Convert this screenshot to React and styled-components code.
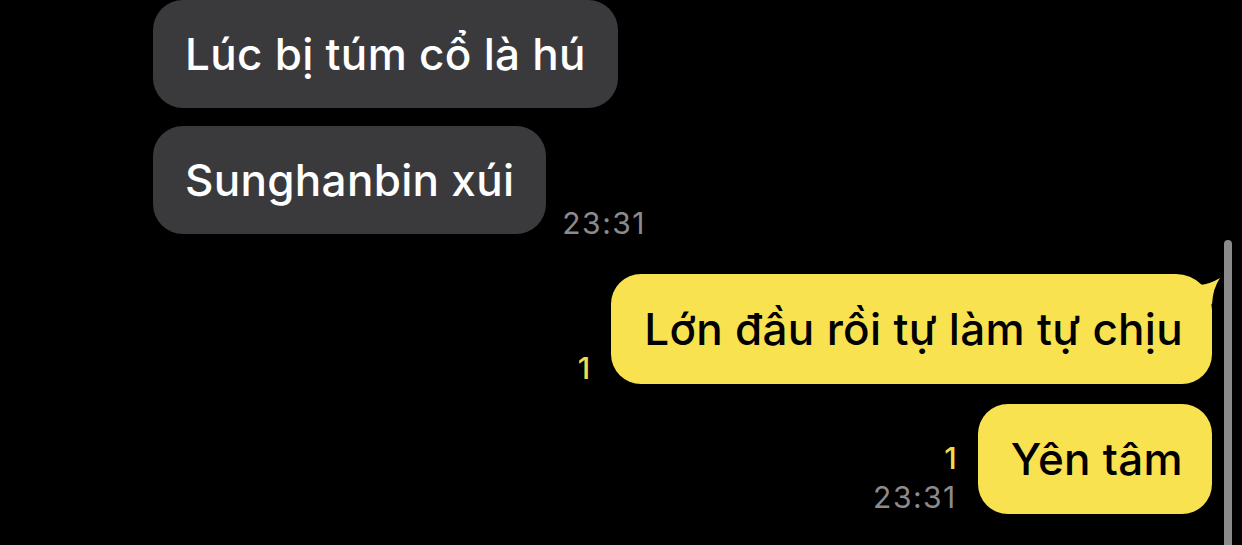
import React from 'react'
import styled, { createGlobalStyle } from 'styled-components'

const GlobalStyle = createGlobalStyle`
  html, body {
    margin: 0;
    padding: 0;
    background: #000;
  }
  body {
    font-family: Inter, "Noto Sans", "DejaVu Sans", sans-serif;
  }
`

const Screen = styled.div`
  position: relative;
  width: 1242px;
  height: 545px;
  overflow: hidden;
  background: #000;
`

const Thread = styled.div`
  display: flex;
  flex-direction: column;
`

const Group = styled.div`
  display: flex;
  flex-direction: column;
  gap: ${(p) => p.gap || 18}px;
  margin-top: ${(p) => p.offset || 0}px;
`

const Row = styled.div`
  display: flex;
  align-items: flex-end;
  justify-content: ${(p) => (p.mine ? 'flex-end' : 'flex-start')};
  padding: ${(p) => (p.mine ? '0 30px 0 0' : '0 0 0 153px')};
  gap: ${(p) => (p.mine ? 21 : 16)}px;
`

const Bubble = styled.div`
  position: relative;
  padding: ${(p) => (p.mine ? '29px 29px 29px 33px' : '28px 32px 28px 32px')};
  border-radius: 30px;
  font-size: 44px;
  line-height: 52px;
  letter-spacing: 0.3px;
  font-weight: 500;
  white-space: nowrap;
  background: ${(p) => (p.mine ? '#f9e250' : '#3a3a3c')};
  color: ${(p) => (p.mine ? '#000' : '#fff')};
  border-top-right-radius: ${(p) => (p.tail ? 36 : 30)}px;
`

const Tail = styled.svg`
  position: absolute;
  top: 0;
  right: -10px;
  width: 24px;
  height: 40px;
`

const Meta = styled.div`
  display: flex;
  flex-direction: column;
  align-items: ${(p) => (p.mine ? 'flex-end' : 'flex-start')};
  margin-bottom: ${(p) => p.bottom || 0}px;
`

const ReadCount = styled.span`
  color: #f3dc4a;
  font-size: 30px;
  line-height: 36px;
  font-weight: 500;
  margin-bottom: ${(p) => p.space || 0}px;
`

const Time = styled.span`
  color: #8b8b8d;
  font-size: 30px;
  line-height: 30px;
  letter-spacing: 1.5px;
  font-weight: 400;
`

const Scrollbar = styled.div`
  position: absolute;
  top: 240px;
  right: 10px;
  width: 8px;
  height: 330px;
  border-radius: 4px;
  background: #8a8a8a;
`

const App = () => {
  return (
    <Screen>
      <GlobalStyle />
      <Thread>
        <Group gap={18}>
          <Row>
            <Bubble>Lúc bị túm cổ là hú</Bubble>
          </Row>
          <Row>
            <Bubble>Sunghanbin xúi</Bubble>
            <Meta bottom={-4}>
              <Time>23:31</Time>
            </Meta>
          </Row>
        </Group>
        <Group gap={20} offset={40}>
          <Row mine>
            <Meta mine bottom={-2}>
              <ReadCount>1</ReadCount>
            </Meta>
            <Bubble mine tail>
              Lớn đầu rồi tự làm tự chịu
              <Tail viewBox="-14 0 24 40">
                <path d="M-12 11 Q-2 10 8 4 Q1 14 0 30 L-12 30 Z" fill="#f9e250" />
              </Tail>
            </Bubble>
          </Row>
          <Row mine>
            <Meta mine bottom={2}>
              <ReadCount space={6}>1</ReadCount>
              <Time>23:31</Time>
            </Meta>
            <Bubble mine>Yên tâm</Bubble>
          </Row>
        </Group>
      </Thread>
      <Scrollbar />
    </Screen>
  )
}

export default App
